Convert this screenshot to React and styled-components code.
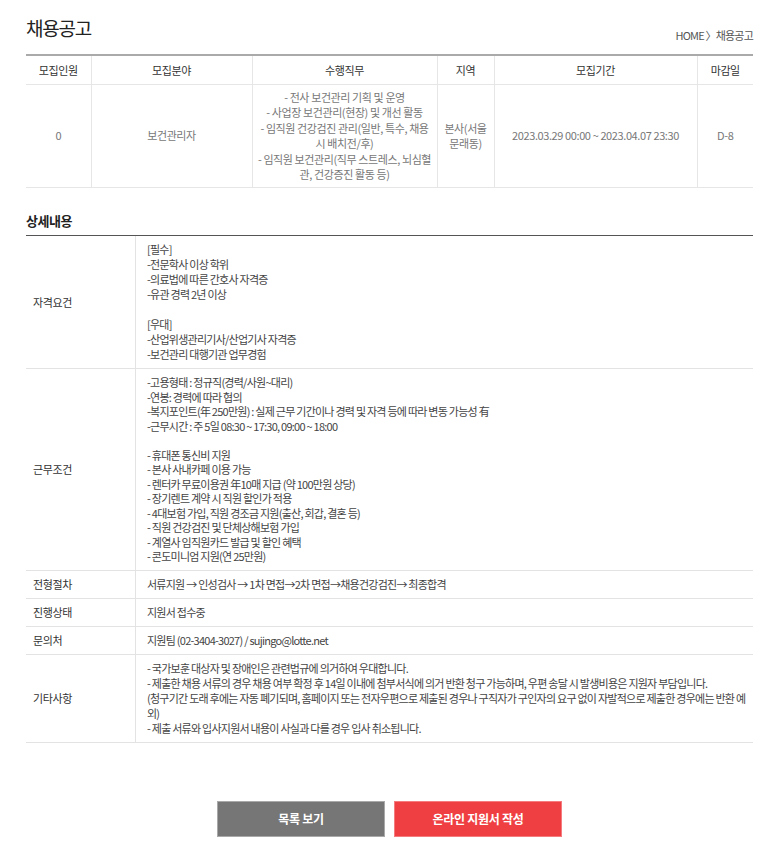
import React from 'react'
import styled, {createGlobalStyle} from 'styled-components'

// -------------------------------------------------------------
// Constants.
// -------------------------------------------------------------

const FONT = `"Noto Sans CJK KR", "Noto Sans", sans-serif`

const summaryColumns = [
  {title: '모집인원', width: 65},
  {title: '모집분야', width: 161},
  {title: '수행직무', width: 185},
  {title: '지역', width: 57},
  {title: '모집기간', width: 203},
  {title: '마감일', width: 56},
]

const duties = [
  '- 전사 보건관리 기획 및 운영',
  '- 사업장 보건관리(현장) 및 개선 활동',
  '- 임직원 건강검진 관리(일반, 특수, 채용',
  '시 배치전/후)',
  '- 임직원 보건관리(직무 스트레스, 뇌심혈',
  '관, 건강증진 활동 등)',
]

const details = [
  {
    label: '자격요건',
    lines: [
      '[필수]',
      '-전문학사 이상 학위',
      '-의료법에 따른 간호사 자격증',
      '-유관 경력 2년 이상',
      '',
      '[우대]',
      '-산업위생관리기사/산업기사 자격증',
      '-보건관리 대행기관 업무경험',
    ],
  },
  {
    label: '근무조건',
    dense: true,
    lines: [
      '-고용형태 : 정규직(경력/사원~대리)',
      '-연봉: 경력에 따라 협의',
      '-복지포인트(年 250만원) : 실제 근무 기간이나 경력 및 자격 등에 따라 변동 가능성 有',
      '-근무시간 : 주 5일 08:30 ~ 17:30, 09:00 ~ 18:00',
      '',
      '- 휴대폰 통신비 지원',
      '- 본사 사내카페 이용 가능',
      '- 렌터카 무료이용권 年10매 지급 (약 100만원 상당)',
      '- 장기렌트 계약 시 직원 할인가 적용',
      '- 4대보험 가입, 직원 경조금 지원(출산, 회갑, 결혼 등)',
      '- 직원 건강검진 및 단체상해보험 가입',
      '- 계열사 임직원카드 발급 및 할인 혜택',
      '- 콘도미니엄 지원(연 25만원)',
    ],
  },
  {label: '전형절차', lines: ['서류지원 → 인성검사 → 1차 면접→2차 면접→채용건강검진→ 최종합격']},
  {label: '진행상태', lines: ['지원서 접수중']},
  {label: '문의처', lines: ['지원팀 (02-3404-3027) / sujingo@lotte.net']},
  {
    label: '기타사항',
    lines: [
      '- 국가보훈 대상자 및 장애인은 관련법규에 의거하여 우대합니다.',
      '- 제출한 채용 서류의 경우 채용 여부 확정 후 14일 이내에 첨부서식에 의거 반환 청구 가능하며, 우편 송달 시 발생비용은 지원자 부담입니다.',
      '(청구기간 도래 후에는 자동 폐기되며, 홈페이지 또는 전자우편으로 제출된 경우나 구직자가 구인자의 요구 없이 자발적으로 제출한 경우에는 반환 예',
      '외)',
      '- 제출 서류와 입사지원서 내용이 사실과 다를 경우 입사 취소됩니다.',
    ],
  },
]

// -------------------------------------------------------------
// Global.
// -------------------------------------------------------------

const GlobalStyle = createGlobalStyle`
  body {
    margin: 0;
    background: #fff;
    font-family: ${FONT};
  }
`

const Page = styled.div`
  width: 727px;
  padding: 0 20px 21px 26px;
  font-family: ${FONT};
`

// -------------------------------------------------------------
// Header.
// -------------------------------------------------------------

const Header = styled.header`
  display: flex;
  justify-content: space-between;
  align-items: flex-end;
  height: 42px;
  padding-top: 4px;
  margin-bottom: 8px;
`

const Title = styled.h1`
  margin: 0;
  font-size: 19px;
  font-weight: 400;
  letter-spacing: -1.2px;
  color: #222;
  line-height: 36px;
`

const Breadcrumb = styled.div`
  font-size: 11px;
  letter-spacing: -0.8px;
  color: #555;
  line-height: 16px;
  padding-bottom: 3px;
`

// -------------------------------------------------------------
// Summary table.
// -------------------------------------------------------------

const SummaryTable = styled.table`
  width: 100%;
  border-collapse: collapse;
  table-layout: fixed;
  border-top: 2px solid #aaa;
  font-size: 11px;
  letter-spacing: -0.4px;

  th,
  td {
    text-align: center;
    border-bottom: 1px solid #e6e6e6;
    border-left: 1px solid #e6e6e6;
    padding: 0;
  }

  th:first-child,
  td:first-child {
    border-left: 0;
  }

  th {
    height: 28px;
    font-weight: 400;
    color: #333;
  }

  td {
    height: 102px;
    color: #777;
    line-height: 15.5px;
  }
`

const SummaryLine = styled.span`
  display: block;
  white-space: nowrap;
`

// -------------------------------------------------------------
// Detail table.
// -------------------------------------------------------------

const SectionTitle = styled.h2`
  margin: 24px 0 0;
  padding-bottom: 5px;
  font-size: 13px;
  font-weight: 700;
  color: #222;
  line-height: 18px;
  letter-spacing: -0.5px;
  border-bottom: 1px solid #555;
`

const DetailTable = styled.table`
  width: 100%;
  border-collapse: collapse;
  table-layout: fixed;
  font-size: 11px;
  letter-spacing: -0.75px;

  th,
  td {
    border-bottom: 1px solid #e3e3e3;
    text-align: left;
    vertical-align: middle;
  }

  th {
    width: 102px;
    padding: 0 0 0 7px;
    font-weight: 400;
    letter-spacing: -0.4px;
    color: #333;
    border-right: 1px solid #e3e3e3;
  }

  td {
    padding: 6px 12px 6px 11px;
    color: #444;
  }
`

const Line = styled.span`
  display: block;
  white-space: nowrap;
  height: ${p => (p.$dense ? 14.5 : 15)}px;
  line-height: ${p => (p.$dense ? 14.5 : 15)}px;
`

// -------------------------------------------------------------
// Buttons.
// -------------------------------------------------------------

const Buttons = styled.div`
  display: flex;
  justify-content: center;
  gap: 9px;
  margin-top: 58px;
`

const Button = styled.button`
  width: 168px;
  height: 36px;
  border: 1px solid ${p => (p.$primary ? '#f47c7e' : '#a9a9a9')};
  background: ${p => (p.$primary ? '#ef3f42' : '#767676')};
  color: #fff;
  font-family: ${FONT};
  font-size: 12px;
  font-weight: 700;
  letter-spacing: -0.3px;
  cursor: pointer;
`

// -------------------------------------------------------------
// Export.
// -------------------------------------------------------------

export default function App() {
  return (
    <Page>
      <GlobalStyle />
      <Header>
        <Title>채용공고</Title>
        <Breadcrumb>HOME 〉채용공고</Breadcrumb>
      </Header>

      <SummaryTable>
        <colgroup>
          {summaryColumns.map(c => (
            <col key={c.title} style={{width: c.width}} />
          ))}
        </colgroup>
        <thead>
          <tr>
            {summaryColumns.map(c => (
              <th key={c.title}>{c.title}</th>
            ))}
          </tr>
        </thead>
        <tbody>
          <tr>
            <td>0</td>
            <td>보건관리자</td>
            <td>
              {duties.map(d => (
                <SummaryLine key={d}>{d}</SummaryLine>
              ))}
            </td>
            <td>
              <SummaryLine>본사(서울</SummaryLine>
              <SummaryLine>문래동)</SummaryLine>
            </td>
            <td>2023.03.29 00:00 ~ 2023.04.07 23:30</td>
            <td>D-8</td>
          </tr>
        </tbody>
      </SummaryTable>

      <SectionTitle>상세내용</SectionTitle>
      <DetailTable>
        <tbody>
          {details.map(row => (
            <tr key={row.label}>
              <th>{row.label}</th>
              <td>
                {row.lines.map((l, i) => (
                  <Line key={i} $dense={row.dense}>
                    {l}
                  </Line>
                ))}
              </td>
            </tr>
          ))}
        </tbody>
      </DetailTable>

      <Buttons>
        <Button>목록 보기</Button>
        <Button $primary>온라인 지원서 작성</Button>
      </Buttons>
    </Page>
  )
}
